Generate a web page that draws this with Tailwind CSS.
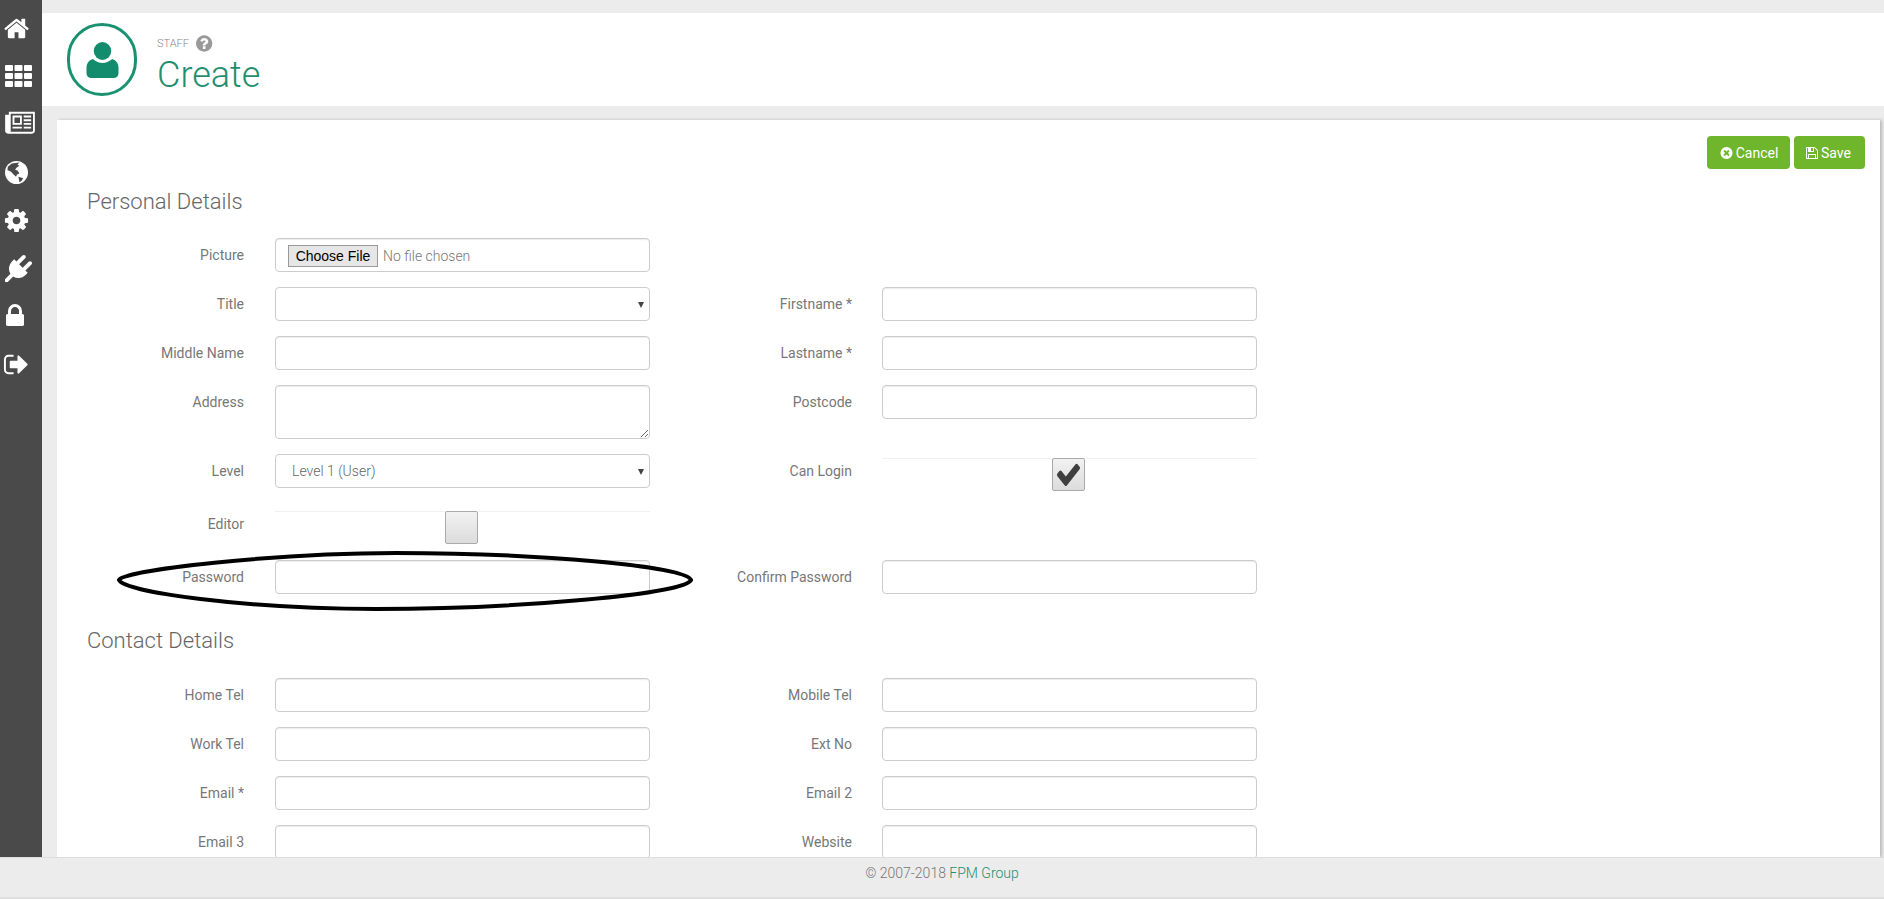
<!DOCTYPE html>
<html lang="en">

<head>
    <meta charset="utf-8" />
    <meta name="viewport" content="width=device-width, initial-scale=1.0" />
    <title>Staff - Create</title>
    <script src="https://cdn.jsdelivr.net/npm/@tailwindcss/browser@4"></script>
</head>

<body class="bg-[#ececec] font-['Roboto',sans-serif] text-sm text-[#777]">
    <div class="flex h-screen flex-col overflow-hidden">
        <div class="flex min-h-0 flex-1">
            <!-- Sidebar -->
            <nav class="flex w-[42px] shrink-0 flex-col items-start bg-[#4a4a4a] pt-1 text-white">
                <a href="#" class="flex h-12 w-[34px] items-center justify-center">
                    <svg class="h-[27px] w-[27px]" viewBox="0 0 1792 1792" fill="currentColor"><path d="M1408 992v480q0 26-19 45t-45 19h-384v-384h-256v384h-384q-26 0-45-19t-19-45v-480q0-1 .5-3t.5-3l575-474 575 474q1 2 1 6zm223-69l-62 74q-8 9-21 11h-3q-13 0-21-7l-692-577-692 577q-12 8-24 7-13-2-21-11l-62-74q-8-10-7-23.5t11-21.5l719-599q32-26 76-26t76 26l244 204v-195q0-14 9-23t23-9h192q14 0 23 9t9 23v408l219 182q10 8 11 21.5t-7 23.5z"/></svg>
                </a>
                <a href="#" class="flex h-12 w-[37px] items-center justify-center">
                    <svg class="h-[22px] w-[27px]" viewBox="0 0 27 22" fill="currentColor">
                        <rect x="0" y="0" width="8" height="6" rx="1"/><rect x="9.500" y="0" width="8" height="6" rx="1"/><rect x="19" y="0" width="8" height="6" rx="1"/>
                        <rect x="0" y="8" width="8" height="6" rx="1"/><rect x="9.500" y="8" width="8" height="6" rx="1"/><rect x="19" y="8" width="8" height="6" rx="1"/>
                        <rect x="0" y="16" width="8" height="6" rx="1"/><rect x="9.500" y="16" width="8" height="6" rx="1"/><rect x="19" y="16" width="8" height="6" rx="1"/>
                    </svg>
                </a>
                <a href="#" class="flex h-12 w-[40px] items-center justify-center">
                    <svg class="-mt-0.5 h-[26px] w-[30px]" viewBox="0 0 2048 1792" fill="currentColor"><path d="M1024 512h-384v384h384v-384zm128 640v128h-640v-128h640zm0-768v640h-640v-640h640zm640 768v128h-512v-128h512zm0-256v128h-512v-128h512zm0-256v128h-512v-128h512zm0-256v128h-512v-128h512zm128 1056v-1184h-1536v1184q0 30-21 52h1493q26 0 45-19t19-33zm128-1312v1312q0 80-56 136t-136 56h-1664q-80 0-136-56t-56-136v-1120h256v-192h1792z"/></svg>
                </a>
                <a href="#" class="flex h-12 w-[33px] items-center justify-center">
                    <svg class="h-[23px] w-[23px]" viewBox="0 0 24 24">
                        <circle cx="12" cy="12" r="12" fill="#fff"/>
                        <path fill="#4a4a4a" d="M7 2.500 L15 1.500 L13 4 L15 5 L12 7 L10.500 9 L13 10 L15 13 L12.500 14 L11.500 16.500 L9 14 L6 11 L2.500 9.500 L3 6 Z"/>
                        <path fill="#4a4a4a" d="M14 16.500 L19 18 L17 21 L15 22 L14.500 19 Z"/>
                    </svg>
                </a>
                <a href="#" class="flex h-12 w-[33px] items-center justify-center">
                    <svg class="h-[27px] w-[27px]" viewBox="0 0 1792 1792" fill="currentColor"><path d="M1152 896q0-106-75-181t-181-75-181 75-75 181 75 181 181 75 181-75 75-181zm512-109v222q0 12-8 23t-20 13l-185 28q-19 54-39 91 35 50 107 138 10 12 10 25t-9 23q-27 37-99 108t-94 71q-12 0-26-9l-138-108q-44 23-91 38-16 136-29 186-7 28-36 28h-222q-14 0-24.500-8.500t-11.500-21.500l-28-184q-49-16-90-37l-141 107q-10 9-25 9-14 0-25-11-126-114-165-168-7-10-7-23 0-12 8-23 15-21 51-66.500t54-70.500q-27-50-41-99l-183-27q-13-2-21-12.500t-8-23.500v-222q0-12 8-23t19-13l186-28q14-46 39-92-40-57-107-138-10-12-10-24 0-10 9-23 26-36 98.500-107.500t94.500-71.500q13 0 26 10l138 107q44-23 91-38 16-136 29-186 7-28 36-28h222q14 0 24.500 8.500t11.500 21.500l28 184q49 16 90 37l142-107q9-9 24-9 13 0 25 10 129 119 165 170 7 8 7 22 0 12-8 23-15 21-51 66.500t-54 70.500q26 50 41 98l183 28q13 2 21 12.500t8 23.500z"/></svg>
                </a>
                <a href="#" class="flex h-12 w-[37px] items-center justify-center">
                    <svg class="h-[27px] w-[27px]" viewBox="0 0 1792 1792" fill="currentColor"><path d="M1755 453q37 38 37 90.500t-37 90.500l-401 400 150 150-160 160q-163 163-389.500 186.500t-411.500-100.500l-362 362h-181v-181l362-362q-124-185-100.500-411.500t186.500-389.500l160-160 150 150 400-401q38-37 91-37t90 37 37 90.500-37 90.500l-400 401 234 234 401-400q38-37 91-37t90 37z"/></svg>
                </a>
                <a href="#" class="flex h-12 w-[30px] items-center justify-center">
                    <svg class="h-[28px] w-[28px]" viewBox="0 0 1792 1792" fill="currentColor"><path d="M640 768h512v-192q0-106-75-181t-181-75-181 75-75 181v192zm832 96v576q0 40-28 68t-68 28h-960q-40 0-68-28t-28-68v-576q0-40 28-68t68-28h32v-192q0-184 132-316t316-132 316 132 132 316v192h32q40 0 68 28t28 68z"/></svg>
                </a>
                <a href="#" class="flex h-12 w-[33px] items-center justify-center">
                    <svg class="h-[27px] w-[27px]" viewBox="0 0 1792 1792" fill="currentColor"><path d="M704 1440q0 4 1 20t.5 26.500-3 23.500-10 19.500-20.500 6.500h-320q-119 0-203.500-84.500t-84.500-203.500v-704q0-119 84.500-203.500t203.500-84.500h320q13 0 22.500 9.500t9.500 22.500q0 4 1 20t.5 26.500-3 23.500-10 19.500-20.500 6.500h-320q-66 0-113 47t-47 113v704q0 66 47 113t113 47h312l11.500 1 11.500 3 8 5.500 7 9 2 13.500zm928-544q0 26-19 45l-544 544q-19 19-45 19t-45-19-19-45v-288h-448q-26 0-45-19t-19-45v-384q0-26 19-45t45-19h448v-288q0-26 19-45t45-19 45 19l544 544q19 19 19 45z"/></svg>
                </a>
            </nav>

            <div class="flex min-w-0 flex-1 flex-col">
                <!-- Page header -->
                <header class="mt-[13px] flex h-[93px] shrink-0 items-center bg-white pl-[25px]">
                    <div class="flex h-[73px] w-[70px] items-center justify-center rounded-full border-[3px] border-[#1a9171]">
                        <svg class="h-[36px] w-[33px]" viewBox="1 1 34 36" preserveAspectRatio="none" fill="#128c6c">
                            <circle cx="18" cy="10" r="9"/>
                            <path d="M8 18 Q18 26 28 18 Q34.500 20 34.500 27 V32 Q34.500 37 29 37 H7 Q1.500 37 1.500 32 V27 Q1.500 20 8 18 Z"/>
                        </svg>
                    </div>
                    <div class="ml-[20px] self-start pt-[21px]">
                        <div class="flex items-center gap-[5px] text-[11px] leading-4 font-light text-[#888]">
                            STAFF
                            <svg class="h-[19px] w-[19px]" viewBox="0 0 1664 1792" fill="#999"><path d="M1024 1376v-192q0-14-9-23t-23-9h-192q-14 0-23 9t-9 23v192q0 14 9 23t23 9h192q14 0 23-9t9-23zm256-672q0-88-55.500-163t-138.500-116-170-41q-243 0-371 213-15 24 8 42l132 100q7 6 19 6 16 0 25-12 53-68 86-92 34-24 86-24 48 0 85.500 26t37.500 59q0 38-20 61t-68 45q-63 28-115.500 86.500t-52.500 125.500v36q0 14 9 23t23 9h192q14 0 23-9t9-23q0-19 21.500-49.500t54.500-49.500q32-18 49-28.500t46-35 44.500-48 28-60.500 12.500-81zm384 192q0 209-103 385.500t-279.500 279.500-385.500 103-385.500-103-279.500-279.500-103-385.500 103-385.500 279.500-279.500 385.500-103 385.500 103 279.500 279.500 103 385.500z"/></svg>
                        </div>
                        <h1 class="mt-px text-[36px] leading-[42px] font-light text-[#1f8f6f]">Create</h1>
                    </div>
                </header>

                <!-- Form card -->
                <main class="mt-[14px] ml-[15px] mr-[4px] min-h-0 flex-1 overflow-hidden bg-white shadow-[2px_0_3px_rgba(0,0,0,0.22)]">
                    <div class="flex justify-end gap-[4px] pt-4 pr-[15px] text-white">
                        <button class="flex h-[33px] w-[83px] items-center justify-center gap-[3px] rounded-[4px] bg-[#6fb62c]">
                            <svg class="h-[14px] w-[14px]" viewBox="0 0 1664 1792" fill="currentColor"><path d="M1277 1122q0-26-19-45l-181-181 181-181q19-19 19-45 0-27-19-46l-90-90q-19-19-46-19-26 0-45 19l-181 181-181-181q-19-19-45-19-27 0-46 19l-90 90q-19 19-19 46 0 26 19 45l181 181-181 181q-19 19-19 45 0 27 19 46l90 90q19 19 46 19 26 0 45-19l181-181 181 181q19 19 45 19 27 0 46-19l90-90q19-19 19-46zm387-226q0 209-103 385.500t-279.500 279.500-385.500 103-385.500-103-279.500-279.500-103-385.500 103-385.500 279.500-279.500 385.500-103 385.500 103 279.500 279.500 103 385.500z"/></svg>
                            Cancel
                        </button>
                        <button class="flex h-[33px] w-[71px] items-center justify-center gap-0.5 rounded-[4px] bg-[#6fb62c] pr-[3px]">
                            <svg class="h-[14px] w-[14px]" viewBox="0 0 1536 1792" fill="currentColor"><path d="M384 1536h768v-384h-768v384zm896 0h128v-896q0-14-10-38.500t-20-34.500l-281-281q-10-10-34.500-20t-38.500-10v416q0 40-28 68t-68 28h-576q-40 0-68-28t-28-68v-416h-128v1280h128v-416q0-40 28-68t68-28h832q40 0 68 28t28 68v416zm-384-928v-320q0-13-9.500-22.500t-22.500-9.500h-192q-13 0-22.500 9.500t-9.500 22.500v320q0 13 9.500 22.500t22.500 9.500h192q13 0 22.500-9.500t9.500-22.500zm640 32v928q0 40-28 68t-68 28h-1344q-40 0-68-28t-28-68v-1344q0-40 28-68t68-28h928q40 0 88 20t76 48l280 280q28 28 48 76t20 88z"/></svg>
                            Save
                        </button>
                    </div>

                    <h2 class="mt-[17px] mb-[20px] pl-[30px] text-[22px] leading-8 font-light text-[#666]">Personal Details</h2>

                    <div class="relative grid grid-cols-[218px_375px_232px_375px] gap-y-[15px]">
                        <label class="h-[34px] pr-[31px] text-right leading-[34px]">Picture</label>
                        <div class="flex h-[34px] items-center rounded-[4px] border border-[#ccc] pt-px pl-3 shadow-[inset_0_1px_1px_rgba(0,0,0,0.075)]">
                            <input type="file" class="w-full font-light text-[#777] file:mr-[5px] file:h-[22px] file:w-[90px] file:border file:border-[#999] file:bg-[#e6e6e6] file:font-['Liberation_Sans',sans-serif] file:text-[14px] file:font-normal file:text-black">
                        </div>
                        <div class="col-span-2"></div>

                        <label class="h-[34px] pr-[31px] text-right leading-[34px]">Title</label>
                        <div class="relative h-[34px]">
                            <select class="h-full w-full appearance-none rounded-[4px] border border-[#ccc] bg-white pl-[16px] font-light text-[#666]"></select>
                            <span class="pointer-events-none absolute top-[15px] right-[6px] border-x-[3.5px] border-t-[6px] border-x-transparent border-t-[#444]"></span>
                        </div>
                        <label class="h-[34px] pr-[30px] text-right leading-[34px]">Firstname *</label>
                        <input class="h-[34px] rounded-[4px] border border-[#ccc] shadow-[inset_0_1px_1px_rgba(0,0,0,0.075)]">

                        <label class="h-[34px] pr-[31px] text-right leading-[34px]">Middle Name</label>
                        <input class="h-[34px] rounded-[4px] border border-[#ccc] shadow-[inset_0_1px_1px_rgba(0,0,0,0.075)]">
                        <label class="h-[34px] pr-[30px] text-right leading-[34px]">Lastname *</label>
                        <input class="h-[34px] rounded-[4px] border border-[#ccc] shadow-[inset_0_1px_1px_rgba(0,0,0,0.075)]">

                        <label class="h-[34px] pr-[31px] text-right leading-[34px]">Address</label>
                        <textarea class="block h-[54px] rounded-[4px] border border-[#ccc] shadow-[inset_0_1px_1px_rgba(0,0,0,0.075)]"></textarea>
                        <label class="h-[34px] pr-[30px] text-right leading-[34px]">Postcode</label>
                        <input class="h-[34px] rounded-[4px] border border-[#ccc] shadow-[inset_0_1px_1px_rgba(0,0,0,0.075)]">

                        <label class="h-[34px] pr-[31px] text-right leading-[34px]">Level</label>
                        <div class="relative h-[34px]">
                            <select class="h-full w-full appearance-none rounded-[4px] border border-[#ccc] bg-white pl-[16px] font-light text-[#666]">
                                <option>Level 1 (User)</option>
                            </select>
                            <span class="pointer-events-none absolute top-[15px] right-[6px] border-x-[3.5px] border-t-[6px] border-x-transparent border-t-[#444]"></span>
                        </div>
                        <label class="h-[34px] pr-[30px] text-right leading-[34px]">Can Login</label>
                        <div class="mt-1 flex h-[38px] justify-center border-t border-[#f0f0f0]">
                            <div class="-mt-px -ml-0.5 flex h-[33px] w-[33px] items-center justify-center rounded-[2px] border border-[#aaa] bg-gradient-to-b from-[#f2f2f2] to-[#dcdcdc]">
                                <svg class="h-[23px] w-[23px]" viewBox="121 294 1550 1228" preserveAspectRatio="none" fill="#3f3f3f"><path d="M1671 566q0 40-28 68l-724 724-136 136q-28 28-68 28t-68-28l-136-136-362-362q-28-28-28-68t28-68l136-136q28-28 68-28t68 28l294 295 656-657q28-28 68-28t68 28l136 136q28 28 28 68z"/></svg>
                            </div>
                        </div>

                        <label class="-mt-1 h-[34px] pr-[31px] text-right leading-[34px]">Editor</label>
                        <div class="flex h-[34px] justify-center border-t border-[#f0f0f0]">
                            <div class="-mt-px -ml-0.5 h-[33px] w-[33px] rounded-[2px] border border-[#aaa] bg-gradient-to-b from-[#f2f2f2] to-[#dcdcdc]"></div>
                        </div>
                        <div class="col-span-2"></div>

                        <label class="h-[34px] pr-[31px] text-right leading-[34px]">Password</label>
                        <input type="password" class="h-[34px] rounded-[4px] border border-[#ccc] shadow-[inset_0_1px_1px_rgba(0,0,0,0.075)]">
                        <label class="h-[34px] pr-[30px] text-right leading-[34px]">Confirm Password</label>
                        <input type="password" class="h-[34px] rounded-[4px] border border-[#ccc] shadow-[inset_0_1px_1px_rgba(0,0,0,0.075)]">

                        <!-- Hand-drawn mark around the password field -->
                        <svg class="pointer-events-none absolute top-[312px] left-[59px] h-[62px] w-[578px]" viewBox="0 0 578 62" fill="none">
                            <path d="M3 30 C8 20 160 3 280 3 C420 3 570 16 575 30 C570 44 400 59 260 59 C130 59 8 42 3 30 Z" stroke="#000" stroke-width="4"/>
                        </svg>
                    </div>

                    <h2 class="mt-[31px] mb-[21px] pl-[30px] text-[22px] leading-8 font-light text-[#666]">Contact Details</h2>

                    <div class="grid grid-cols-[218px_375px_232px_375px] gap-y-[15px]">
                        <label class="h-[34px] pr-[31px] text-right leading-[34px]">Home Tel</label>
                        <input class="h-[34px] rounded-[4px] border border-[#ccc] shadow-[inset_0_1px_1px_rgba(0,0,0,0.075)]">
                        <label class="h-[34px] pr-[30px] text-right leading-[34px]">Mobile Tel</label>
                        <input class="h-[34px] rounded-[4px] border border-[#ccc] shadow-[inset_0_1px_1px_rgba(0,0,0,0.075)]">

                        <label class="h-[34px] pr-[31px] text-right leading-[34px]">Work Tel</label>
                        <input class="h-[34px] rounded-[4px] border border-[#ccc] shadow-[inset_0_1px_1px_rgba(0,0,0,0.075)]">
                        <label class="h-[34px] pr-[30px] text-right leading-[34px]">Ext No</label>
                        <input class="h-[34px] rounded-[4px] border border-[#ccc] shadow-[inset_0_1px_1px_rgba(0,0,0,0.075)]">

                        <label class="h-[34px] pr-[31px] text-right leading-[34px]">Email *</label>
                        <input class="h-[34px] rounded-[4px] border border-[#ccc] shadow-[inset_0_1px_1px_rgba(0,0,0,0.075)]">
                        <label class="h-[34px] pr-[30px] text-right leading-[34px]">Email 2</label>
                        <input class="h-[34px] rounded-[4px] border border-[#ccc] shadow-[inset_0_1px_1px_rgba(0,0,0,0.075)]">

                        <label class="h-[34px] pr-[31px] text-right leading-[34px]">Email 3</label>
                        <input class="h-[34px] rounded-[4px] border border-[#ccc] shadow-[inset_0_1px_1px_rgba(0,0,0,0.075)]">
                        <label class="h-[34px] pr-[30px] text-right leading-[34px]">Website</label>
                        <input class="h-[34px] rounded-[4px] border border-[#ccc] shadow-[inset_0_1px_1px_rgba(0,0,0,0.075)]">
                    </div>
                </main>
            </div>
        </div>

        <footer class="h-[42px] shrink-0 border-t border-b-2 border-[#ddd] border-b-[#e0e0e0] bg-[#ececec] pt-[5px] text-center leading-5 font-light">
            © 2007-2018 <a href="#" class="text-[#1f8f6f]">FPM Group</a>
        </footer>
    </div>
</body>

</html>
